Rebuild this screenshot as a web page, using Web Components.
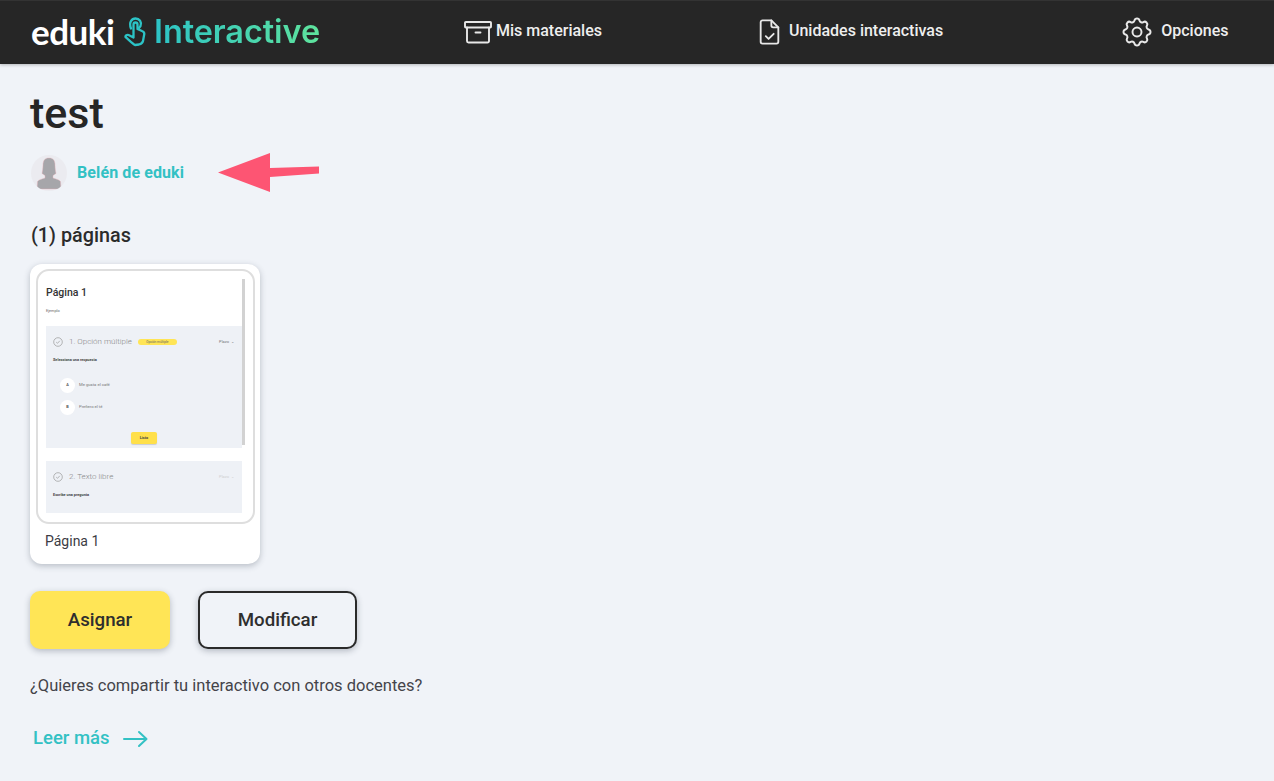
<!DOCTYPE html>
<html lang="es"><head><meta charset="utf-8"><title>test</title>
<style>
html,body{margin:0;padding:0;height:100%}
body{background:#f0f3f8;font-family:Roboto,"Liberation Sans",sans-serif;color:#2b2b2b;overflow:hidden}
</style></head><body>
<app-header></app-header>
<material-page></material-page>
<script>
function def(name,css,html,init){
  customElements.define(name,class extends HTMLElement{
    constructor(){super();const s=this.attachShadow({mode:'open'});s.innerHTML='<style>'+css+'</style>'+html;if(init)init(this,s);}
  });
}
def('eduki-logo',`
:host{display:flex;align-items:center;height:62px}
.e{font:700 35px/1 "Lato",sans-serif;color:#fff;letter-spacing:-.5px;width:83px;margin-top:-3px}
svg{width:22px;height:30px;margin-left:10px;flex:none;margin-top:-1px}
.i{font:600 32.500px/1 Inter,sans-serif;margin-left:8px;width:168px;white-space:nowrap;margin-top:-1px;letter-spacing:-.1px;
background:linear-gradient(90deg,#2cc3c6,#5fe39c);-webkit-background-clip:text;background-clip:text;color:transparent}
`,`<span class="e">eduki</span>
<svg viewBox="0 0 22 30" fill="none" stroke="#2cc3c6" stroke-width="2.300" stroke-linejoin="round" stroke-linecap="round">
<path d="M7 11.500C4.500 5 8 1.500 11.500 1.500c4 0 6.500 3.500 5 7.500L15 11"/>
<path d="M9.500 13V7.500a2 2 0 0 1 4 0V12l4.500 2c2 .7 2.500 2 2.200 3.500L19 24c-.4 2-2 3-4 3.500l-4 .5C9 27 4 22 1.500 20c-.3-1.500 1.500-2.500 3-2l5 2.500V13z"/>
</svg>
<span class="i">Interactive</span>`);
def('nav-item',`
:host{display:flex;align-items:center;color:#eee;font:500 16px/1 Roboto,sans-serif;white-space:nowrap}
::slotted(svg){flex:none}
span{display:block;margin-top:-3px}
`,`<slot name="icon"></slot><span><slot></slot></span>`);
def('app-header',`
:host{display:flex;align-items:center;height:64px;background:#262626;padding-left:31px;box-sizing:border-box;box-shadow:0 1px 3px rgba(0,0,0,.25);position:relative;border-top:1px solid #333}
nav-item svg{stroke:#e8e8e8;fill:none;stroke-linecap:round;stroke-linejoin:round}
`,`<eduki-logo></eduki-logo>
<nav-item style="margin-left:142px"><svg slot="icon" width="28" height="24" viewBox="0 0 28 24" stroke-width="1.900" style="margin-right:4px;margin-top:-2px"><rect x="1" y="2" width="26" height="5.500" rx=".8"/><path d="M3 7.500V21a1.500 1.500 0 0 0 1.500 1.500h19A1.500 1.500 0 0 0 25 21V7.500M11.500 12.500h5"/></svg>Mis materiales</nav-item>
<nav-item style="margin-left:157px"><svg slot="icon" width="21" height="26" viewBox="0 0 22 28" stroke-width="2" style="margin-right:9px;margin-top:-2px"><path d="M13 1.500H3.500a2 2 0 0 0-2 2v21a2 2 0 0 0 2 2h15a2 2 0 0 0 2-2V9z"/><path d="M13 1.500V7a2 2 0 0 0 2 2h5.500M7 18.500l3 3 5.500-5.500"/></svg>Unidades interactivas</nav-item>
<nav-item style="margin-left:176px"><svg slot="icon" width="36" height="36" viewBox="0 0 24 24" stroke-width="1.300" style="margin-right:6px;margin-top:-1px"><path d="M10.325 4.317c.426-1.756 2.924-1.756 3.35 0a1.724 1.724 0 002.573 1.066c1.543-.94 3.31.826 2.37 2.37a1.724 1.724 0 001.065 2.572c1.756.426 1.756 2.924 0 3.35a1.724 1.724 0 00-1.066 2.573c.94 1.543-.826 3.31-2.37 2.37a1.724 1.724 0 00-2.572 1.065c-.426 1.756-2.924 1.756-3.35 0a1.724 1.724 0 00-2.573-1.066c-1.543.94-3.31-.826-2.37-2.37a1.724 1.724 0 00-1.065-2.572c-1.756-.426-1.756-2.924 0-3.35a1.724 1.724 0 001.066-2.573c-.94-1.543.826-3.31 2.37-2.37.996.608 2.296.07 2.572-1.065z"/><circle cx="12" cy="12" r="3"/></svg>Opciones</nav-item>`);
def('author-row',`
:host{display:flex;align-items:center;gap:10px;height:38px;position:relative;margin-left:1px}
.av{width:36px;height:36px;border-radius:50%;background:#ebebf0;overflow:hidden;flex:none}
.n{font:700 16px/1 Roboto,sans-serif;color:#33c1c4;letter-spacing:.1px}
.arrow{position:absolute;left:187px;top:-1px}
`,`<svg class="av" viewBox="0 0 36 36"><path fill="#a6a6aa" stroke="#eab4bc" stroke-width=".4" d="M18 3c4 0 6 2.500 6 7 0 3 .5 6 1 8.500l-3 2v2.500c3 1 6 1.500 7.500 3.500L30 34H6l.5-7.500C8 24.500 11 24 14 23v-2.500l-3-2c.5-2.500 1-5.500 1-8.500 0-4.500 2-7 6-7z"/></svg>
<span class="n">Belén de eduki</span>
<svg class="arrow" width="102" height="40" viewBox="0 0 102 40"><path fill="#fd5573" d="M0 19.500 52 0v15l49-1.500v7L52 24v15z"/></svg>`);
def('preview-question',`
:host{display:block;background:#eef1f6;box-sizing:border-box;padding:9px 7px 0;font-family:Roboto,sans-serif}
.h{display:flex;align-items:center;height:14px}
svg{width:10px;height:10px;flex:none;margin-right:6px}
.t{font:300 8px/1 Roboto,sans-serif;color:#888;white-space:nowrap}
.s{margin-left:auto;font:400 4px/1 Roboto,sans-serif;color:var(--plazo,#777);margin-right:1px}
.p{font:700 3.800px/1 Roboto,sans-serif;color:#444;margin-top:9px}
`,`<div class="h"><svg viewBox="0 0 10 10" fill="none" stroke="#999" stroke-width=".7"><circle cx="5" cy="5" r="4.300"/><path d="M3.200 5.100 4.500 6.300 6.800 3.800"/></svg><span class="t"><slot name="title"></slot></span><slot name="tag"></slot><span class="s">Plazo &nbsp;⌄</span></div><div class="p"><slot name="prompt"></slot></div><slot></slot>`);
def('preview-option',`
:host{display:flex;align-items:center;gap:4px;height:15px;margin:0 0 7px 7px;font:400 4.200px/1 Roboto,sans-serif;color:#777}
b{width:15px;height:15px;border-radius:50%;background:#fff;display:flex;align-items:center;justify-content:center;font:700 3.800px/1 Roboto,sans-serif;color:#555}
`,`<b><slot name="k"></slot></b><span><slot></slot></span>`);
def('page-thumb',`
:host{display:block;width:230px;height:300px;background:#fff;border-radius:12px;box-shadow:0 2px 6px rgba(40,50,70,.28);box-sizing:border-box;padding:5px 5px 0 6px}
.frame{height:255px;width:219px;box-sizing:border-box;border:2px solid #dedede;border-radius:13px;overflow:hidden;padding:0 11px 0 8px;position:relative;background:#fff}
.bar{position:absolute;right:8px;top:8px;width:3px;height:166px;background:#d2d2d2;z-index:1}
h3{margin:0;padding-top:15px;font:500 10.500px/13px Roboto,sans-serif;color:#333}
.sub{font:400 3.800px/1 Roboto,sans-serif;color:#666;margin-top:10px;height:4px}
.q1{margin-top:13px;height:122px;position:relative}
.q2{margin-top:13px;height:52px;--plazo:#d0d0d0}
.tag{background:#ffe556;border-radius:4px;height:6px;width:39px;margin-left:6px;font:400 3.200px/6px Roboto,sans-serif;color:#666;text-align:center}
.opts{margin-top:16px}
.go{position:absolute;left:85px;top:106px;width:26px;height:12px;background:#ffe04a;border-radius:2px;font:700 3.800px/12px Roboto,sans-serif;color:#444;text-align:center;box-shadow:0 1px 1px rgba(0,0,0,.15)}
.cap{font:400 14px/1 Roboto,sans-serif;color:#3c3c44;margin:10px 0 0 9px}
`,`<div class="frame"><div class="bar"></div><h3>Página 1</h3><div class="sub">Ejemplo</div>
<preview-question class="q1"><span slot="title">1. Opción múltiple</span><div slot="tag" class="tag">Opción múltiple</div><span slot="prompt">Selecciona una respuesta</span>
<div class="opts"><preview-option><span slot="k">A</span>Me gusta el café</preview-option><preview-option><span slot="k">B</span>Prefiero el té</preview-option></div><div class="go">Listo</div></preview-question>
<preview-question class="q2"><span slot="title">2. Texto libre</span><span slot="prompt">Escribe una pregunta</span></preview-question></div>
<div class="cap">Página 1</div>`);
def('action-button',`
:host{display:flex;align-items:center;justify-content:center;height:58px;box-sizing:border-box;border-radius:10px;font:500 18.700px/1 Roboto,sans-serif;color:#2e2e2e;box-shadow:0 2px 6px rgba(40,50,70,.3)}
:host([primary]){background:#ffe556;width:140px}
:host(:not([primary])){border:2px solid #2a2a2a;width:159px;background:#f0f3f8}
`,`<slot></slot>`);
def('material-page',`
:host{display:block;padding:0 30px;font-family:Roboto,sans-serif}
h1{margin:0;padding-top:26px;font:500 43px/47px Roboto,sans-serif;color:#262626}
author-row{margin-top:17px}
h2{margin:33px 0 0 1px;font:500 19.800px/22px Roboto,sans-serif;color:#2b2b2b}
page-thumb{margin-top:17px}
.btns{display:flex;gap:28px;margin-top:27px}
p{margin:27px 0 0;font:400 16.500px/19px Roboto,sans-serif;color:#44444a}
.more{display:flex;align-items:center;margin:33px 0 0 3px;font:500 18.500px/21px Roboto,sans-serif;color:#33c1c4;gap:13px}
`,`<h1>test</h1><author-row></author-row><h2>(1) páginas</h2><page-thumb></page-thumb>
<div class="btns"><action-button primary>Asignar</action-button><action-button>Modificar</action-button></div>
<p>¿Quieres compartir tu interactivo con otros docentes?</p>
<div class="more"><span>Leer más</span><svg width="25" height="18" viewBox="0 0 25 18" fill="none" stroke="#33c1c4" stroke-width="2" stroke-linecap="round" stroke-linejoin="round"><path d="M1 9h22M16 2l7.500 7-7.500 7"/></svg></div>`);
</script>
</body></html>
